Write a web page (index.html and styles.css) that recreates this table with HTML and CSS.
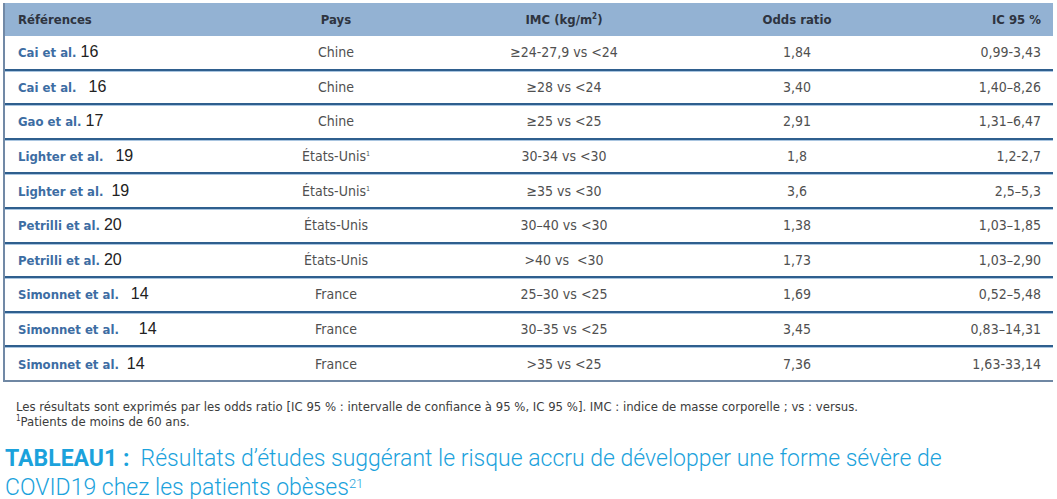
FILE: index.html
```html
<!DOCTYPE html>
<html lang="fr">
<head>
<meta charset="utf-8">
<title>Tableau 1</title>
<link rel="stylesheet" href="styles.css">
</head>
<body>
<div class="figure">
  <table class="data">
    <thead>
      <tr>
        <th class="c-ref">Références</th>
        <th class="c-pays">Pays</th>
        <th class="c-imc">IMC (kg/m<sup>2</sup>)</th>
        <th class="c-or">Odds ratio</th>
        <th class="c-ic">IC 95 %</th>
      </tr>
    </thead>
    <tbody>
      <tr><td class="c-ref"><span class="auth">Cai et al.</span><span class="num g1">16</span></td><td class="c-pays">Chine</td><td class="c-imc">≥24-27,9 vs &lt;24</td><td class="c-or">1,84</td><td class="c-ic">0,99-3,43</td></tr>
      <tr><td class="c-ref"><span class="auth">Cai et al.</span><span class="num g3">16</span></td><td class="c-pays">Chine</td><td class="c-imc">≥28 vs &lt;24</td><td class="c-or">3,40</td><td class="c-ic">1,40–8,26</td></tr>
      <tr><td class="c-ref"><span class="auth">Gao et al.</span><span class="num g1">17</span></td><td class="c-pays">Chine</td><td class="c-imc">≥25 vs &lt;25</td><td class="c-or">2,91</td><td class="c-ic">1,31–6,47</td></tr>
      <tr><td class="c-ref"><span class="auth">Lighter et al.</span><span class="num g3">19</span></td><td class="c-pays">États-Unis<sup>1</sup></td><td class="c-imc">30-34 vs &lt;30</td><td class="c-or">1,8</td><td class="c-ic">1,2-2,7</td></tr>
      <tr><td class="c-ref"><span class="auth">Lighter et al.</span><span class="num g2">19</span></td><td class="c-pays">États-Unis<sup>1</sup></td><td class="c-imc">≥35 vs &lt;30</td><td class="c-or">3,6</td><td class="c-ic">2,5–5,3</td></tr>
      <tr><td class="c-ref"><span class="auth">Petrilli et al.</span><span class="num g1">20</span></td><td class="c-pays">États-Unis</td><td class="c-imc">30–40 vs &lt;30</td><td class="c-or">1,38</td><td class="c-ic">1,03–1,85</td></tr>
      <tr><td class="c-ref"><span class="auth">Petrilli et al.</span><span class="num g1">20</span></td><td class="c-pays">États-Unis</td><td class="c-imc">&gt;40 vs &nbsp;&lt;30</td><td class="c-or">1,73</td><td class="c-ic">1,03–2,90</td></tr>
      <tr><td class="c-ref"><span class="auth">Simonnet et al.</span><span class="num g3">14</span></td><td class="c-pays">France</td><td class="c-imc">25–30 vs &lt;25</td><td class="c-or">1,69</td><td class="c-ic">0,52–5,48</td></tr>
      <tr><td class="c-ref"><span class="auth">Simonnet et al.</span><span class="num g4">14</span></td><td class="c-pays">France</td><td class="c-imc">30–35 vs &lt;25</td><td class="c-or">3,45</td><td class="c-ic">0,83–14,31</td></tr>
      <tr class="last"><td class="c-ref"><span class="auth">Simonnet et al.</span><span class="num g2">14</span></td><td class="c-pays">France</td><td class="c-imc">&gt;35 vs &lt;25</td><td class="c-or">7,36</td><td class="c-ic">1,63-33,14</td></tr>
    </tbody>
  </table>

  <div class="notes">
    <p>Les résultats sont exprimés par les odds ratio [IC 95 % : intervalle de confiance à 95 %, IC 95 %]. IMC : indice de masse corporelle ; vs : versus.</p>
    <p><sup>1</sup>Patients de moins de 60 ans.</p>
  </div>

  <p class="caption"><strong>TABLEAU1 :</strong>&nbsp; Résultats d’études suggérant le risque accru de développer une forme sévère de COVID19 chez les patients obèses<sup>21</sup></p>
</div>
</body>
</html>
```

FILE: styles.css
```css
html, body {
  margin: 0;
  padding: 0;
  background: #ffffff;
}

.figure {
  padding: 3px 0 0 3px;
  width: 1049px;
}

.data {
  width: 1049px;
  border-collapse: separate;
  border-spacing: 0;
  border-left: 2px solid #7189a6;
  table-layout: fixed;
  font-family: "DejaVu Sans Condensed", "DejaVu Sans", sans-serif;
  font-size: 14px;
  color: #505050;
}

.data th {
  background: #93b2d3;
  color: #2e3440;
  font-size: 13px;
  font-weight: 600;
  height: 33px;
  padding: 0;
  vertical-align: middle;
}

.data th sup {
  font-size: 8px;
}

.data td {
  height: 32.6px;
  padding: 0;
  vertical-align: middle;
  border-bottom: 2px solid #2f5f8e;
  box-shadow: 0 1px 0 #a9c5e0;
}

.data tr.last td {
  border-bottom: 2px solid #6f87a3;
  box-shadow: none;
}

.c-ref {
  width: 213px;
  text-align: left;
  padding-left: 13px !important;
}

.c-pays { width: 210px; text-align: center; }
.c-imc  { width: 246px; text-align: center; }
.c-or   { width: 220px; text-align: center; }
.c-ic   { width: 134px; text-align: right; padding-right: 12px !important; }

.auth {
  color: #3d6da3;
  font-size: 13px;
  font-weight: 600;
}

.num {
  font-family: "Liberation Sans", Arial, sans-serif;
  font-size: 16px;
  color: #222222;
}

.g1 { margin-left: 4px; }
.g2 { margin-left: 8px; }
.g3 { margin-left: 12px; }
.g4 { margin-left: 20px; }

.data td sup {
  font-size: 7px;
  vertical-align: 5px;
}

.notes {
  margin: 17px 0 0 13px;
  font-family: "DejaVu Sans Condensed", "DejaVu Sans", sans-serif;
  font-size: 13px;
  color: #3c3c3c;
  line-height: 15px;
}

.notes p {
  margin: 0;
}

.notes sup {
  font-size: 8px;
  vertical-align: 5px;
  line-height: 0;
}

.caption {
  margin: 15px 0 0 2px;
  width: 1000px;
  font-family: Roboto, "Noto Sans", sans-serif;
  font-weight: 300;
  font-size: 23px;
  line-height: 29px;
  color: #1ba2dc;
}

.caption strong {
  font-weight: 700;
}

.caption sup {
  font-size: 13px;
  vertical-align: 7px;
  line-height: 0;
}
```
